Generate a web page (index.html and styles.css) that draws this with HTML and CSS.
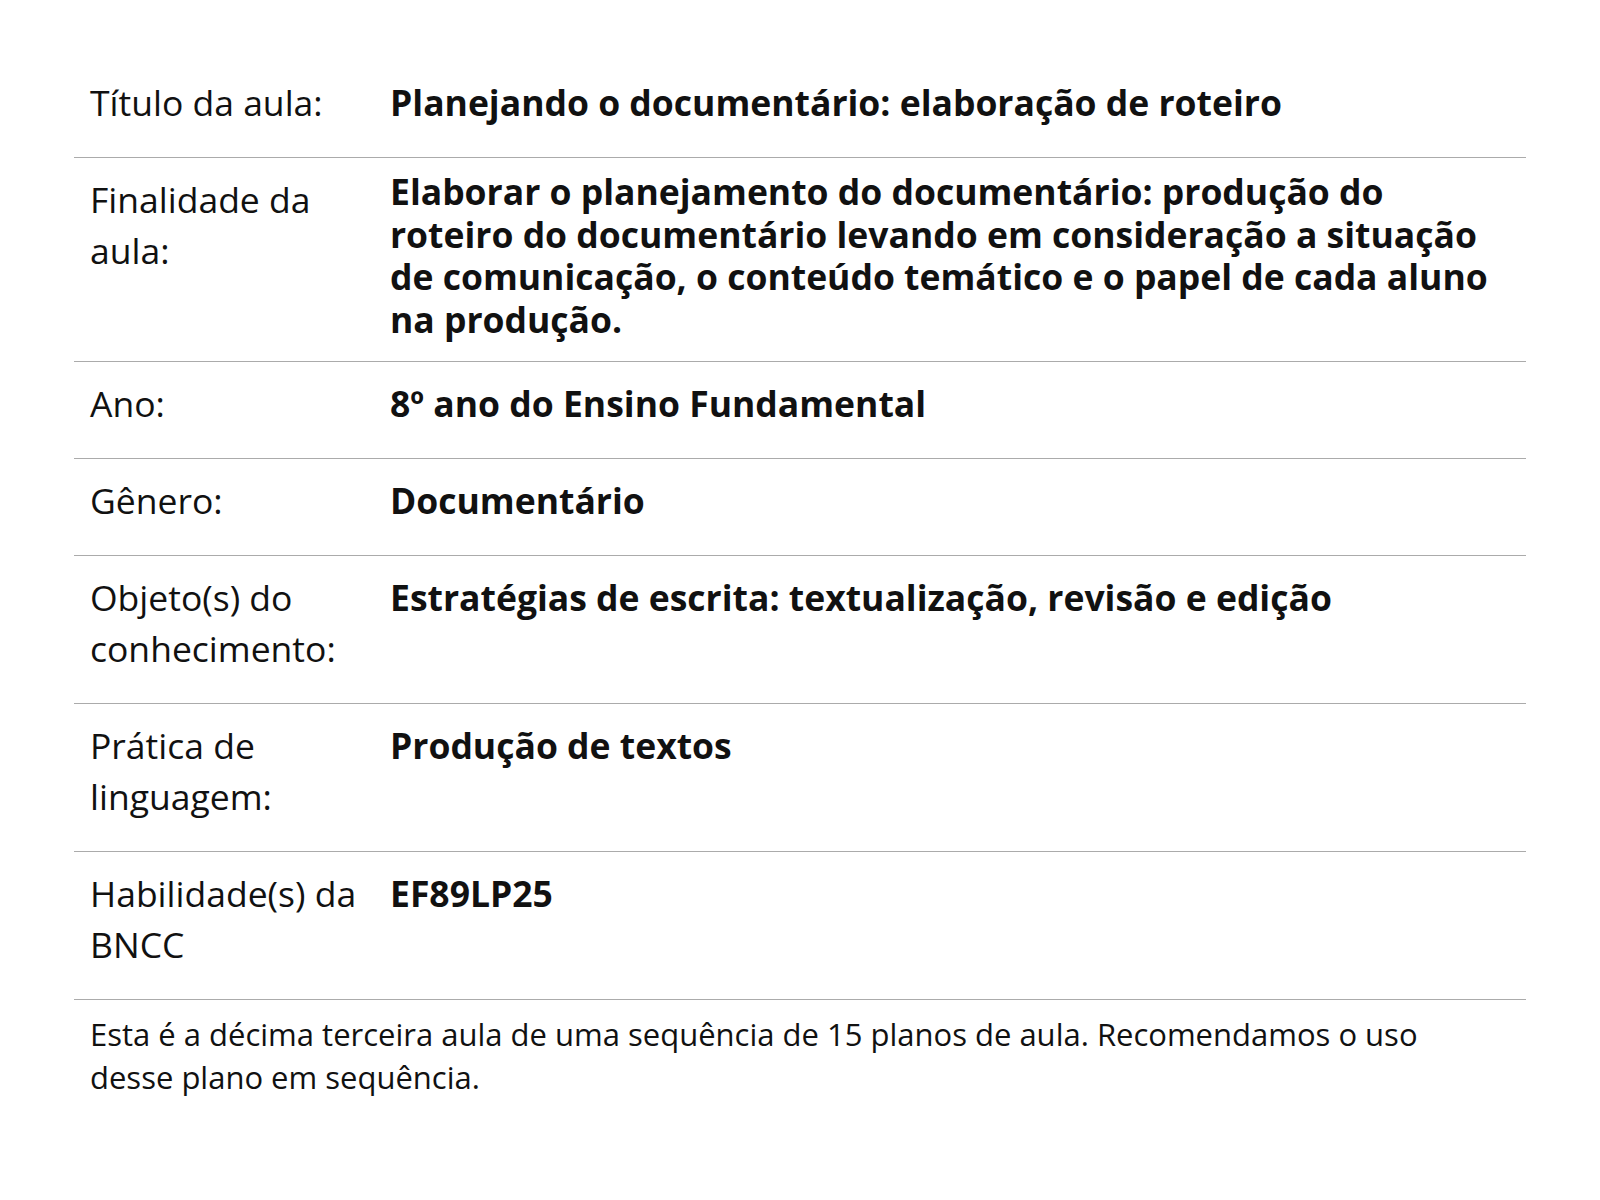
FILE: index.html
```html
<!DOCTYPE html>
<html lang="pt-BR">
<head>
<meta charset="utf-8">
<title>Plano de aula</title>
<link rel="stylesheet" href="styles.css">
</head>
<body>
<main class="plan">
  <div class="row">
    <div class="label">Título da aula:</div>
    <div class="value">Planejando o documentário: elaboração de roteiro</div>
  </div>
  <div class="row">
    <div class="label">Finalidade da aula:</div>
    <div class="value value--multi">Elaborar o planejamento do documentário: produção do roteiro do documentário levando em consideração a situação de comunicação, o conteúdo temático e o papel de cada aluno na produção.</div>
  </div>
  <div class="row">
    <div class="label">Ano:</div>
    <div class="value">8º ano do Ensino Fundamental</div>
  </div>
  <div class="row">
    <div class="label">Gênero:</div>
    <div class="value">Documentário</div>
  </div>
  <div class="row">
    <div class="label">Objeto(s) do conhecimento:</div>
    <div class="value">Estratégias de escrita: textualização, revisão e edição</div>
  </div>
  <div class="row">
    <div class="label">Prática de linguagem:</div>
    <div class="value">Produção de textos</div>
  </div>
  <div class="row">
    <div class="label">Habilidade(s) da BNCC</div>
    <div class="value">EF89LP25</div>
  </div>
  <p class="note">Esta é a décima terceira aula de uma sequência de 15 planos de aula. Recomendamos o uso desse plano em sequência.</p>
</main>
</body>
</html>
```

FILE: styles.css
```css
html, body {
  margin: 0;
  padding: 0;
  background: #ffffff;
}

body {
  font-family: "Open Sans", "Noto Sans", sans-serif;
  color: #111111;
}

.plan {
  width: 1452px;
  margin: 61px auto 0;
}

.row {
  display: grid;
  grid-template-columns: 316px 1fr;
  align-items: start;
  border-bottom: 1px solid #ababab;
}

.label {
  padding: 16px 16px 29px;
  font-size: 35.5px;
  line-height: 51px;
  font-weight: 400;
}

.value {
  padding: 20px 16px 0 0;
  font-size: 35.5px;
  line-height: 42.5px;
  font-weight: 700;
}

.value--multi {
  padding-top: 12px;
  padding-bottom: 21px;
}

.note {
  margin: 0;
  padding: 13px 60px 8px 16px;
  font-size: 31px;
  line-height: 43px;
}
```
